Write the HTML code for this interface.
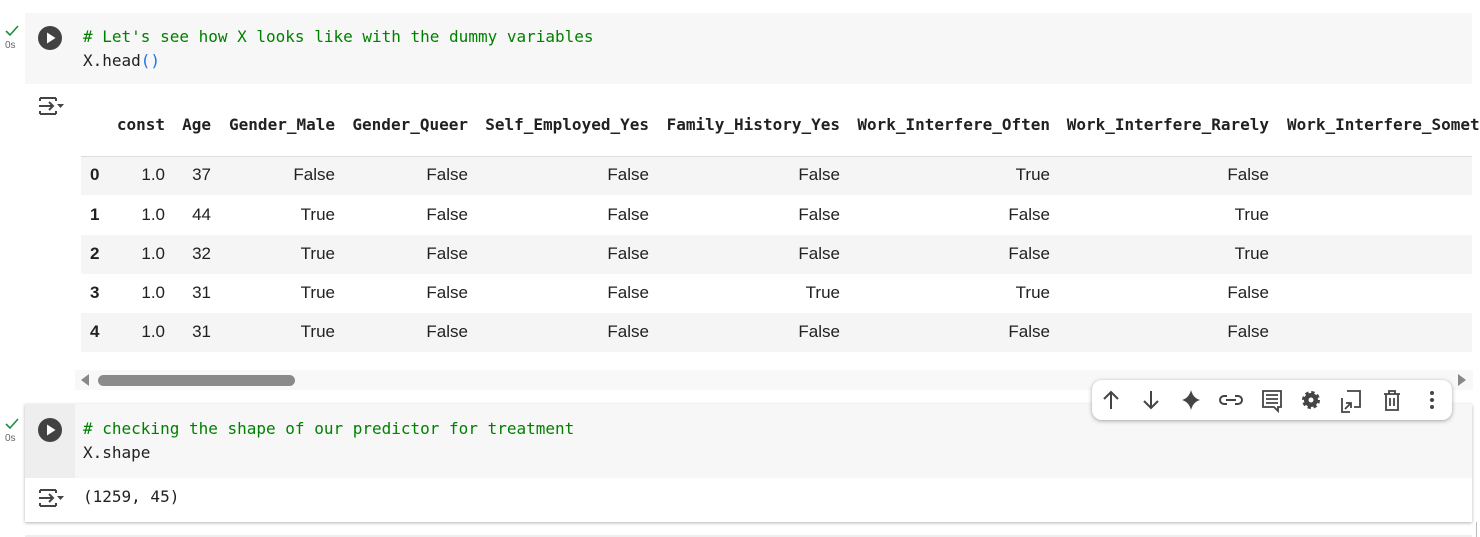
<!DOCTYPE html>
<html><head><meta charset="utf-8"><style>
body{margin:0;width:1480px;height:537px;background:#fff;position:relative;overflow:hidden;font-family:"Liberation Sans",sans-serif;}
.a{position:absolute;white-space:nowrap;}
.mono{font-family:"DejaVu Sans Mono","Liberation Mono",monospace;}
.h{font-family:"DejaVu Sans Mono",monospace;font-weight:bold;font-size:16px;color:#212121;top:115px;}
.c{font-size:17px;color:#212121;}
.cm{color:#008000}
</style></head><body>
<!-- cell 1 -->
<svg class="a" style="left:5px;top:25px" width="14" height="12"><path d="M1 6 L5 10 L13 1" fill="none" stroke="#1e8e3e" stroke-width="1.6"/></svg>
<div class="a" style="left:5px;top:40px;color:#666;font-size:10px">0s</div>
<div class="a" style="left:25px;top:13px;width:1447px;height:71px;background:#f7f7f7"></div>
<svg class="a" style="left:38px;top:26px" width="24" height="24"><circle cx="12" cy="12" r="12" fill="#424242"/><path d="M9 6.5 L17.5 12 L9 17.5Z" fill="#fff"/></svg>
<div class="a mono" style="left:83px;top:25px;font-size:16px;line-height:24px;color:#212121"><span class="cm"># Let's see how X looks like with the dummy variables</span><br>X.head<span style="color:#1a73e8">()</span></div>
<svg class="a" style="left:37px;top:95px" width="28" height="22" fill="none" stroke="#444" stroke-width="2"><path d="M3 3 H19 M3 19 H19 M3 3 V6 M3 16 V19 M19 3 V6 M19 16 V19"/><path d="M2 11 H16 M12 7 L16 11 L12 15"/><path d="M20 9 H27 L23.5 13Z" fill="#444" stroke="none"/></svg>
<!-- table -->
<div class="a" style="left:81px;top:156px;width:1391px;height:1px;background:#ddd"></div>
<div class="a" style="left:81px;top:157px;width:1391px;height:38px;background:#f5f5f5"></div>
<div class="a" style="left:81px;top:235px;width:1391px;height:39px;background:#f5f5f5"></div>
<div class="a" style="left:81px;top:313px;width:1391px;height:39px;background:#f5f5f5"></div>
<div class="a h" style="right:1315px">const</div>
<div class="a h" style="right:1269px">Age</div>
<div class="a h" style="right:1145px">Gender_Male</div>
<div class="a h" style="right:1012px">Gender_Queer</div>
<div class="a h" style="right:831px">Self_Employed_Yes</div>
<div class="a h" style="right:640px">Family_History_Yes</div>
<div class="a h" style="right:430px">Work_Interfere_Often</div>
<div class="a h" style="right:211px">Work_Interfere_Rarely</div>
<div class="a h" style="left:1287px">Work_Interfere_Sometimes</div>
<div id="rows"></div>
<script>
var data=[["False","False","False","False","True","False"],["True","False","False","False","False","True"],["True","False","False","False","False","True"],["True","False","False","True","True","False"],["True","False","False","False","False","False"]];
var ages=["37","44","32","31","31"];var rights=[335,468,649,840,1050,1269];var tops=[165,205,244,283,322];var h="";
for(var i=0;i<5;i++){var t=tops[i];
h+='<div class="a c" style="left:90px;top:'+t+'px;font-weight:bold">'+i+'</div>';
h+='<div class="a c" style="right:'+(1480-165)+'px;top:'+t+'px">1.0</div>';
h+='<div class="a c" style="right:'+(1480-211)+'px;top:'+t+'px">'+ages[i]+'</div>';
for(var j=0;j<6;j++)h+='<div class="a c" style="right:'+(1480-rights[j])+'px;top:'+t+'px">'+data[i][j]+'</div>';}
document.getElementById('rows').innerHTML=h;
</script>
<!-- scrollbar -->
<div class="a" style="left:75px;top:370px;width:1398px;height:20px;background:#f8f8f8"></div>
<svg class="a" style="left:80px;top:374px" width="10" height="12"><path d="M9 0 V12 L1 6Z" fill="#888"/></svg>
<div class="a" style="left:98px;top:375px;width:197px;height:11px;border-radius:6px;background:#8a8a8a"></div>
<svg class="a" style="left:1457px;top:374px" width="10" height="12"><path d="M1 0 V12 L9 6Z" fill="#888"/></svg>
<!-- cell 2 -->
<svg class="a" style="left:5px;top:418px" width="14" height="12"><path d="M1 6 L5 10 L13 1" fill="none" stroke="#1e8e3e" stroke-width="1.6"/></svg>
<div class="a" style="left:5px;top:433px;color:#666;font-size:10px">0s</div>
<div class="a" style="left:25px;top:404px;width:1447px;height:118px;background:#fff;box-shadow:0 1px 3px rgba(0,0,0,.3)"></div>
<div class="a" style="left:25px;top:404px;width:50px;height:74px;background:#eee"></div>
<div class="a" style="left:75px;top:404px;width:1397px;height:74px;background:#f7f7f7"></div>
<svg class="a" style="left:38px;top:418px" width="24" height="24"><circle cx="12" cy="12" r="12" fill="#424242"/><path d="M9 6.5 L17.5 12 L9 17.5Z" fill="#fff"/></svg>
<div class="a mono" style="left:83px;top:417px;font-size:16px;line-height:24px;color:#212121"><span class="cm"># checking the shape of our predictor for treatment</span><br>X.shape</div>
<svg class="a" style="left:37px;top:487px" width="28" height="22" fill="none" stroke="#444" stroke-width="2"><path d="M3 3 H19 M3 19 H19 M3 3 V6 M3 16 V19 M19 3 V6 M19 16 V19"/><path d="M2 11 H16 M12 7 L16 11 L12 15"/><path d="M20 9 H27 L23.5 13Z" fill="#444" stroke="none"/></svg>
<div class="a mono" style="left:83px;top:487px;font-size:16px;color:#212121">(1259, 45)</div>
<!-- toolbar -->
<div class="a" style="left:1092px;top:380px;width:360px;height:40px;background:#fff;border-radius:10px;box-shadow:0 1px 4px rgba(0,0,0,.35)"></div>
<svg class="a" style="left:1092px;top:380px" width="360" height="40" fill="none" stroke="#444" stroke-width="2">
<path d="M19 29 V12 M12 19 L19 12 L26 19"/>
<path d="M59 11 V28 M52 21 L59 28 L66 21"/>
<path d="M99 10 Q101 18 108 20 Q101 22 99 30 Q97 22 90 20 Q97 18 99 10Z" fill="#444" stroke="none"/>
<path d="M135 16 H132 A4 4 0 0 0 132 24 H135 M143 16 H146 A4 4 0 0 1 146 24 H143 M134 20 H144"/>
<path d="M171 11 H189 V27 H186 V31 L182 27 H171Z M174 15 H186 M174 19 H186 M174 23 H186" stroke-width="1.8"/>
<circle cx="219" cy="20" r="7" fill="#444" stroke="#444" stroke-width="4" stroke-dasharray="3 2.5"/><circle cx="219" cy="20" r="2.5" fill="#fff" stroke="none"/>
<path d="M255 11 H268 V27 H262 M250 18 V32 H258 M253 29 L259 23 M254 23 H259 V28" stroke-width="1.8"/>
<path d="M292 14 H308 M297 14 V11 H303 V14 M294 14 V30 H306 V14 M298 18 V26 M302 18 V26" stroke-width="1.8"/>
<circle cx="340" cy="13" r="2" fill="#444" stroke="none"/><circle cx="340" cy="20" r="2" fill="#444" stroke="none"/><circle cx="340" cy="27" r="2" fill="#444" stroke="none"/>
</svg>
<div class="a" style="left:1476px;top:522px;width:1px;height:15px;background:#bbb"></div>
<div class="a" style="left:25px;top:535px;width:1447px;height:2px;background:#eee"></div>
</body></html>
